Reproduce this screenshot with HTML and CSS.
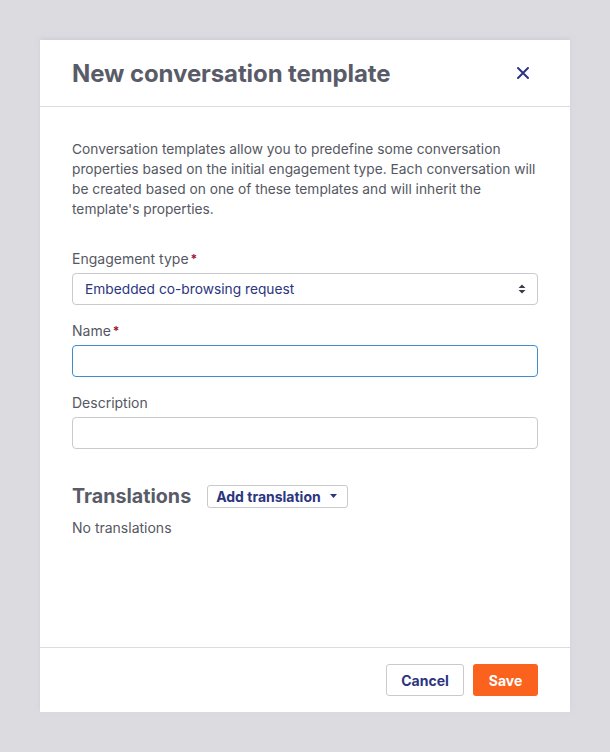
FILE: index.html
```html
<!DOCTYPE html>
<html>
<head>
<meta charset="utf-8">
<link rel="stylesheet" href="styles.css">
</head>
<body>
<div class="modal">
  <div class="modal-header">
    <h1 class="title">New conversation template</h1>
    <button class="close" aria-label="Close">
      <svg width="14" height="14" viewBox="0 0 14 14"><path d="M2 2 L12 12 M12 2 L2 12" stroke="#2b3580" stroke-width="2" stroke-linecap="round"/></svg>
    </button>
  </div>
  <div class="modal-body">
    <p class="intro">Conversation templates allow you to predefine some conversation properties based on the initial engagement type. Each conversation will be created based on one of these templates and will inherit the template's properties.</p>
    <div class="field">
      <label class="label">Engagement type<span class="req">*</span></label>
      <div class="select">
        <span>Embedded co-browsing request</span>
        <svg width="8" height="10" viewBox="0 0 8 10"><path d="M4 0.5 L7.5 4 L0.5 4 Z M0.5 6 L7.5 6 L4 9.5 Z" fill="#3b3f4c"/></svg>
      </div>
    </div>
    <div class="field">
      <label class="label">Name<span class="req">*</span></label>
      <div class="input focus"></div>
    </div>
    <div class="field">
      <label class="label">Description</label>
      <div class="input"></div>
    </div>
    <div class="translations">
      <h2 class="sub">Translations</h2>
      <button class="add">Add translation <svg width="7" height="4" viewBox="0 0 7 4"><path d="M0 0 L7 0 L3.5 4 Z" fill="#2b3580"/></svg></button>
    </div>
    <p class="empty">No translations</p>
  </div>
  <div class="modal-footer">
    <button class="btn cancel">Cancel</button>
    <button class="btn save">Save</button>
  </div>
</div>
</body>
</html>
```
FILE: styles.css
```css
html, body {
  margin: 0;
  padding: 0;
}
body {
  background: #dcdbe0;
  font-family: Inter, "Noto Sans", sans-serif;
  padding: 40px;
  width: 530px;
}
.modal {
  background: #fff;
  width: 530px;
  height: 672px;
  display: flex;
  flex-direction: column;
  box-shadow: 0 -2px 4px rgba(200, 200, 215, 0.6);
}
.modal-header {
  height: 67px;
  box-sizing: border-box;
  border-bottom: 1px solid #dcdcdf;
  display: flex;
  align-items: center;
  justify-content: space-between;
  padding: 0 40px 0 32px;
}
.title {
  margin: 0;
  font-size: 24px;
  font-weight: 700;
  color: #595c68;
  letter-spacing: -0.1px;
}
.close {
  border: 0;
  background: none;
  padding: 0;
  width: 14px;
  height: 14px;
  display: flex;
}
.modal-body {
  flex: 1;
  padding: 32px 32px 0;
}
.intro {
  margin: 0 0 31px;
  font-size: 13.75px;
  line-height: 20px;
  color: #555862;
}
.field {
  margin-bottom: 17px;
}
.label {
  display: block;
  font-size: 14px;
  line-height: 18px;
  color: #555862;
  margin-bottom: 5px;
}
.req {
  color: #a3122f;
  margin-left: 2px;
  font-weight: 700;
  font-size: 12px;
  vertical-align: top;
}
.select {
  height: 32px;
  box-sizing: border-box;
  border: 1px solid #c9c9ce;
  border-radius: 4px;
  display: flex;
  align-items: center;
  justify-content: space-between;
  padding: 0 11px 0 12px;
  font-size: 13.75px;
  color: #2b3580;
}
.input {
  height: 32px;
  box-sizing: border-box;
  border: 1px solid #c9c9ce;
  border-radius: 4px;
}
.input.focus {
  border-color: #3c8ed4;
}
.translations {
  margin-top: 35px;
  display: flex;
  align-items: center;
  gap: 16px;
}
.sub {
  margin: 0;
  font-size: 19.7px;
  font-weight: 700;
  color: #595c68;
}
.add {
  height: 23px;
  border: 1px solid #c9c9ce;
  border-radius: 3px;
  background: #fff;
  font-family: inherit;
  font-size: 14px;
  font-weight: 700;
  color: #2b3580;
  padding: 0 10px 0 8px;
  display: flex;
  align-items: center;
  gap: 9px;
}
.empty {
  margin: 11px 0 0;
  font-size: 14px;
  color: #555862;
}
.modal-footer {
  height: 65px;
  box-sizing: border-box;
  border-top: 1px solid #dcdcdf;
  display: flex;
  align-items: center;
  justify-content: flex-end;
  gap: 9px;
  padding: 0 32px;
}
.btn {
  height: 32px;
  border-radius: 3px;
  font-family: inherit;
  font-size: 14px;
  font-weight: 700;
}
.cancel {
  width: 78px;
  border: 1px solid #c9c9ce;
  background: #fff;
  color: #2b3580;
}
.save {
  width: 65px;
  border: 0;
  background: #fb621e;
  color: #fff;
}
```
